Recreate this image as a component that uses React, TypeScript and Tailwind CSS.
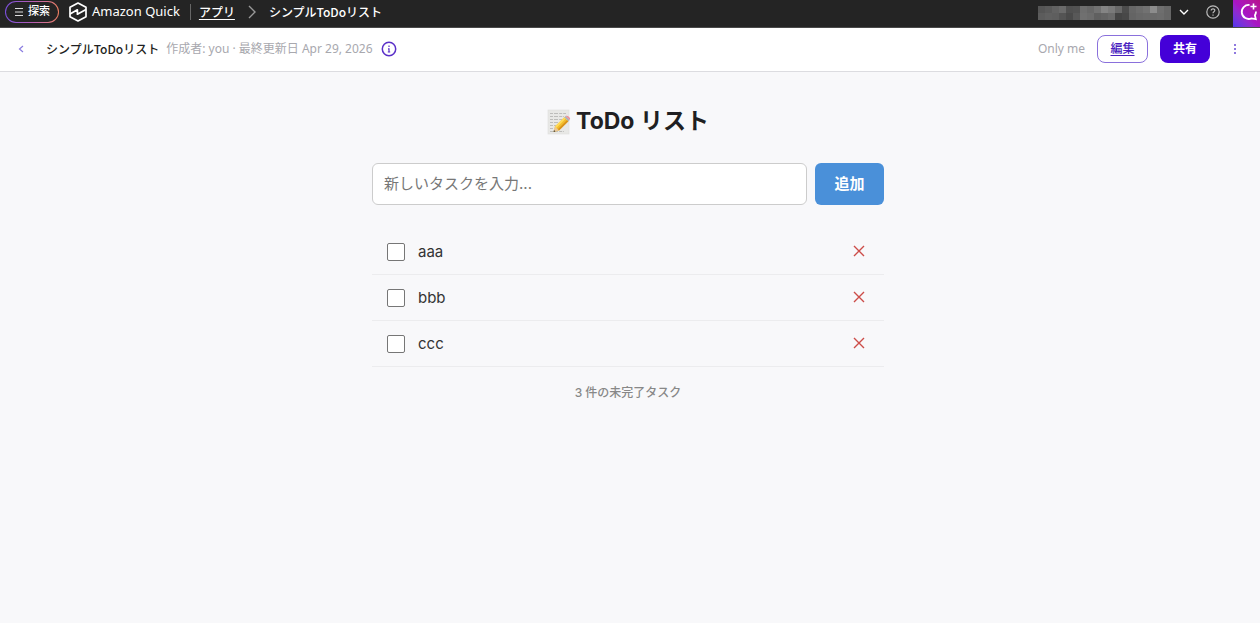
import { useState } from 'react'
import type { FormEvent } from 'react'

interface Task {
  id: number
  text: string
  done: boolean
}

const INITIAL_TASKS: Task[] = [
  { id: 1, text: 'aaa', done: false },
  { id: 2, text: 'bbb', done: false },
  { id: 3, text: 'ccc', done: false },
]

// Masked account name, two rows of grey blocks
const MASK_ROWS = [
  ['#555555', '#5a5a5a', '#626262', '#6a6a6a', '#505050', '#525252', '#6e6e6e', '#686868', '#727272', '#848484', '#7a7a7a', '#686868', '#4c4c4c', '#666666', '#6c6c6c', '#727272', '#8c8c8c', '#6e6e6e', '#666666'],
  ['#5c5c5c', '#606060', '#5e5e5e', '#545454', '#4a4a4a', '#585858', '#707070', '#6c6c6c', '#606060', '#646464', '#6a6a6a', '#444444', '#484848', '#646464', '#686868', '#6a6a6a', '#6a6a6a', '#6c6c6c', '#666666'],
]

function QuickLogo() {
  return (
    <svg width="20" height="20" viewBox="0 0 20 20" fill="none" stroke="#fff" strokeWidth="1.7" strokeLinejoin="round" aria-hidden="true">
      <path d="M10 1 18 5.3V14.7L10 19 2 14.7V5.3Z" />
      <path d="M2 12 9.4 7.8V12.2L18 7.4" />
    </svg>
  )
}

function ChatIcon() {
  return (
    <svg width="20" height="20" viewBox="0 0 20 20" fill="none" stroke="#fff" strokeWidth="1.8" aria-hidden="true">
      <path d="M10.5 3A7 7 0 1 0 12.5 16.4L16.8 17.2 15.9 13.2A7 7 0 0 0 17 9.5" />
      <path d="M14.5 1.5V7.5M11.5 4.5H17.5" strokeWidth="1.6" />
    </svg>
  )
}

function MemoIcon() {
  return (
    <svg width="24" height="26" viewBox="0 0 24 26" aria-hidden="true">
      <rect x="1" y="1" width="21" height="24" fill="#e8e8e6" stroke="#dededc" strokeWidth="0.6" />
      <g stroke="#b8b8b6" strokeWidth="0.9" strokeDasharray="3 1 4 1.2">
        <path d="M3 4.5H19M3 7.5H17M3 10.5H15M3 13.5H12M3 16.5H9M3 19.5H7M3 22.5H17" />
      </g>
      <path d="M6.5 23 8 17.6 17.3 8.3 21.4 12.2 12 21.4Z" fill="#f3bd2c" />
      <path d="M8 17.6 17.3 8.3 18.7 9.6 9.3 19Z" fill="#ffdb58" />
      <path d="M10.8 20.3 20.1 10.9 21.4 12.2 12 21.4Z" fill="#d8921c" />
      <path d="M6.5 23 8 17.6 12 21.4Z" fill="#e9c796" />
      <path d="M6.5 23 7 21.1 8.4 22.4Z" fill="#333" />
      <path d="M17.3 8.3 18.6 7 22.7 10.9 21.4 12.2Z" fill="#a9b2b8" />
      <path d="M18.6 7C20 5.5 24.5 9 22.7 10.9Z" fill="#ea8d9b" />
    </svg>
  )
}

export default function App() {
  const [tasks, setTasks] = useState<Task[]>(INITIAL_TASKS)
  const [text, setText] = useState('')

  const remaining = tasks.filter(t => !t.done).length

  const addTask = (e: FormEvent) => {
    e.preventDefault()
    if (!text.trim()) return
    setTasks([...tasks, { id: Date.now(), text: text.trim(), done: false }])
    setText('')
  }

  const toggleTask = (id: number) => setTasks(tasks.map(t => (t.id === id ? { ...t, done: !t.done } : t)))
  const removeTask = (id: number) => setTasks(tasks.filter(t => t.id !== id))

  return (
    <div className="min-h-screen bg-[#f8f8fa] font-['Noto_Sans','Noto_Sans_CJK_JP',sans-serif] text-[#1f1f22]">
      {/* ── Global bar ── */}
      <header className="flex h-7 items-center justify-between overflow-hidden border-b border-[#4a4a4a] bg-[#242424] text-white">
        <div className="flex items-center pb-1">
          <div className="ml-[5px] h-[22px] rounded-full bg-linear-to-r from-[#7b4fe0] via-[#b45ab4] to-[#f08060] p-px">
            <button className="flex h-5 items-center gap-1 rounded-full bg-[#242424] px-2 text-[11px] font-medium">
              <svg width="10" height="10" viewBox="0 0 10 10" stroke="#ddd" strokeWidth="1" aria-hidden="true">
                <path d="M1 1.5H9M1 5H9M1 8.5H9" />
              </svg>
              探索
            </button>
          </div>
          <a href="#" className="ml-[9px] flex items-center gap-1 text-[13px]">
            <QuickLogo />
            Amazon Quick
          </a>
          <nav className="ml-2.5 flex items-center border-l border-[#666] pl-2 font-['Noto_Sans_CJK_JP',sans-serif] text-xs font-medium">
            <a href="#" className="underline underline-offset-2">アプリ</a>
            <svg className="mx-3" width="10" height="14" viewBox="0 0 10 14" fill="none" stroke="#999" strokeWidth="1.4" aria-hidden="true">
              <path d="M2 1 8 7 2 13" />
            </svg>
            <span>シンプルToDoリスト</span>
          </nav>
        </div>
        <div className="flex items-center">
          <div className="flex items-center gap-[17px] pr-[13px] pb-[3px]">
            <button className="flex items-center gap-2" aria-label="アカウント">
              <span className="flex flex-col pt-[2px]">
                {MASK_ROWS.map((row, i) => (
                  <span key={i} className="flex">
                    {row.map((color, j) => (
                      <span key={j} className="size-[7px]" style={{ backgroundColor: color }} />
                    ))}
                  </span>
                ))}
              </span>
              <svg width="10" height="7" viewBox="0 0 10 7" fill="none" stroke="#fff" strokeWidth="1.4" aria-hidden="true">
                <path d="M1 1 5 5 9 1" />
              </svg>
            </button>
            <button aria-label="ヘルプ">
              <svg width="14" height="14" viewBox="0 0 14 14" fill="none" stroke="#bbb" strokeWidth="1.2" aria-hidden="true">
                <circle cx="7" cy="7" r="6.2" />
                <path d="M5.2 5.6C5.2 3.2 8.9 3.4 8.8 5.5 8.7 6.8 7 6.7 7 8.2M7 9.4V10.7" />
              </svg>
            </button>
          </div>
          <button className="flex h-7 w-[27px] items-center bg-linear-to-tr from-[#4a34ec] via-[#a814c4] to-[#b80c8c] pb-[3px] pl-1.5" aria-label="チャット">
            <ChatIcon />
          </button>
        </div>
      </header>

      {/* ── App bar ── */}
      <div className="flex h-11 items-center justify-between border-b border-[#dcdce0] bg-white pr-5 pb-0.5 pl-4 text-xs">
        <div className="flex items-center">
          <button className="flex h-6 w-[10px] items-center justify-center" aria-label="戻る">
            <svg width="6" height="8" viewBox="0 0 6 8" fill="none" stroke="#8a7ce0" strokeWidth="1.2" aria-hidden="true">
              <path d="M5 1 1.5 4 5 7" />
            </svg>
          </button>
          <span className="ml-5 font-['Noto_Sans_CJK_JP',sans-serif] font-medium">シンプルToDoリスト</span>
          <span className="ml-[7px] text-[#a8a8ae]">作成者: you · 最終更新日 Apr 29, 2026</span>
          <button className="ml-2" aria-label="情報">
            <svg width="16" height="16" viewBox="0 0 16 16" fill="none" stroke="#5a30c8" strokeWidth="1.5" aria-hidden="true">
              <circle cx="8" cy="8" r="6.7" />
              <path d="M8 4.5V6M7 7.8H8V11M6.8 11H9.2" strokeWidth="1.2" />
            </svg>
          </button>
        </div>
        <div className="flex items-center gap-3">
          <span className="text-[#a8a8ae]">Only me</span>
          <button className="h-7 w-[51px] rounded-lg border border-[#8a70dc] font-medium text-[#4a1fc0] underline underline-offset-2">編集</button>
          <button className="h-7 w-[50px] rounded-lg bg-[#4400d8] font-bold text-white">共有</button>
          <button className="flex w-[18px] justify-end" aria-label="その他">
            <svg width="10" height="12" viewBox="0 0 10 12" fill="#6a4cd4" aria-hidden="true">
              <circle cx="5" cy="2" r="1" />
              <circle cx="5" cy="6" r="1" />
              <circle cx="5" cy="10" r="1" />
            </svg>
          </button>
        </div>
      </div>

      <div className="pr-1">
        <main className="mx-auto max-w-lg pt-8 font-['Inter','Noto_Sans_CJK_JP',sans-serif]">
          <h1 className="flex h-[35px] items-center justify-center gap-[5px] text-[23px] font-bold">
            <MemoIcon />
            ToDo リスト
          </h1>

          <form onSubmit={addTask} className="mt-6 flex gap-2">
            <input
              type="text"
              aria-label="新しいタスク"
              value={text}
              onChange={e => setText(e.target.value)}
              placeholder="新しいタスクを入力..."
              className="h-[42px] min-w-0 flex-1 rounded-md border border-[#ccc] bg-white px-[11px] pb-0.5 text-[15px] placeholder:text-[#777]"
            />
            <button type="submit" className="h-[42px] w-[69px] rounded-md bg-[#4a90d9] text-[15px] font-bold text-white">
              追加
            </button>
          </form>

          <ul className="mt-6">
            {tasks.map(task => (
              <li key={task.id} className="flex h-[46px] items-center border-b border-[#ececee] px-[15px]">
                <label className="flex flex-1 items-center gap-[13px] text-[15px] text-[#333]">
                  <input
                    type="checkbox"
                    checked={task.done}
                    onChange={() => toggleTask(task.id)}
                    className="size-[18px] appearance-none rounded-xs border border-[#767676] bg-white checked:bg-[#4a90d9]"
                  />
                  <span className="pt-0.5">{task.text}</span>
                </label>
                <button onClick={() => removeTask(task.id)} className="px-1 pb-0.5" aria-label="削除">
                  <svg width="12" height="12" viewBox="0 0 12 12" stroke="#cc4c48" strokeWidth="1.4" aria-hidden="true">
                    <path d="M1 1 11 11M11 1 1 11" />
                  </svg>
                </button>
              </li>
            ))}
          </ul>

          <p className="mt-[18px] text-center text-xs font-medium text-[#888]">{remaining} 件の未完了タスク</p>
        </main>
      </div>
    </div>
  )
}
